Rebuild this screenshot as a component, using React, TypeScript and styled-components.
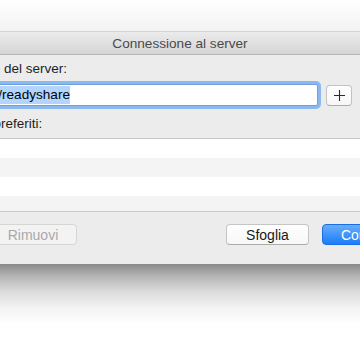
import React from 'react';
import styled, { createGlobalStyle } from 'styled-components';

const GlobalStyle = createGlobalStyle`
  html, body {
    margin: 0;
    padding: 0;
    background: #ffffff;
  }
  body {
    font-family: 'Liberation Sans', Arial, sans-serif;
    -webkit-font-smoothing: antialiased;
  }
`;

const Stage = styled.div`
  width: 360px;
  height: 343px;
  overflow: hidden;
  background: linear-gradient(to bottom, #ffffff 0px, #f2f2f2 31px, #ffffff 31px);
  display: flex;
  flex-direction: column;
`;

const Backdrop = styled.div`
  height: 31px;
  flex: none;
`;

const Window = styled.div`
  flex: none;
  width: 520px;
  margin-left: -70px;
  background: #ececec;
  display: flex;
  flex-direction: column;
  border-top: 1px solid #d4d4d4;
  box-sizing: border-box;
`;

const TitleBar = styled.div`
  height: 22px;
  background: linear-gradient(to bottom, #ebebeb, #d5d5d5);
  border-bottom: 1px solid #b6b6b6;
  display: flex;
  align-items: center;
  justify-content: center;
  font-size: 13.6px;
  color: #4a4a4a;
  padding-left: 70px;
  padding-right: 90px;
`;

const Body = styled.div`
  display: flex;
  flex-direction: column;
  padding: 6px 20px 19px;
`;

const Label = styled.div<{ $top?: number }>`
  font-size: 13.5px;
  line-height: 16px;
  color: #1e1e1e;
  margin-top: ${(p) => p.$top ?? 0}px;
`;

const FieldRow = styled.div`
  display: flex;
  align-items: center;
  gap: 8px;
  margin-top: 7px;
`;

const Field = styled.div`
  width: 368px;
  height: 22px;
  background: #fff;
  border: 1px solid #6f9fdc;
  box-shadow: 0 0 0 3px #8ab8ef;
  border-radius: 2px;
  box-sizing: border-box;
  display: flex;
  align-items: center;
  padding-left: 14px;
  font-size: 13.6px;
  color: #000;
  white-space: nowrap;
`;

const Selection = styled.span`
  background: #b3d5fd;
  line-height: 18px;
`;

const SmallButton = styled.button`
  width: 26px;
  height: 21px;
  padding: 0;
  background: linear-gradient(to bottom, #ffffff, #f6f6f6);
  border: 1px solid #c2c2c2;
  border-bottom-color: #ababab;
  border-radius: 4px;
  display: flex;
  align-items: center;
  justify-content: center;
`;

const List = styled.div`
  margin: 6px -20px 0;
  height: 74px;
  border-top: 1px solid #c9c9c9;
  border-bottom: 1px solid #c9c9c9;
  box-sizing: border-box;
  display: flex;
  flex-direction: column;
  overflow: hidden;
`;

const ListRow = styled.div<{ $alt: boolean }>`
  flex: none;
  height: 19px;
  background: ${(p) => (p.$alt ? '#f4f4f4' : '#ffffff')};
`;

const ButtonRow = styled.div`
  display: flex;
  align-items: center;
  margin-top: 12px;
`;

const PushButton = styled.button<{ $width: number; $variant?: 'default' | 'disabled' | 'primary' }>`
  width: ${(p) => p.$width}px;
  height: 21px;
  padding: 0;
  border-radius: 4px;
  font-family: 'Liberation Sans', Arial, sans-serif;
  font-size: 14px;
  box-sizing: border-box;
  flex: none;
  ${(p) =>
    p.$variant === 'primary'
      ? `
    background: linear-gradient(to bottom, #67aefc, #1c7cf8);
    border: 1px solid #1b6fe6;
    color: #ffffff;
  `
      : p.$variant === 'disabled'
      ? `
    background: #f3f3f3;
    border: 1px solid #d6d6d6;
    color: #a9a9a9;
  `
      : `
    background: linear-gradient(to bottom, #ffffff, #f7f7f7);
    border: 1px solid #c5c5c5;
    border-bottom-color: #acacac;
    color: #1a1a1a;
  `}
`;

const Spacer = styled.div`
  flex: 1;
`;

const Shadow = styled.div`
  height: 80px;
  flex: none;
  background: linear-gradient(
    to bottom,
    #8a8a8a 0px,
    #b4b4b4 12px,
    #dcdcdc 28px,
    #f4f4f4 45px,
    #ffffff 60px
  );
`;

function PlusIcon() {
  return (
    <svg width="13" height="13" viewBox="0 0 13 13">
      <path d="M6.5 1v11M1 6.5h11" stroke="#2a2a2a" strokeWidth="1.1" fill="none" />
    </svg>
  );
}

export default function App() {
  return (
    <>
      <GlobalStyle />
      <Stage>
        <Backdrop />
        <Window>
          <TitleBar>Connessione al server</TitleBar>
          <Body>
            <Label>Indirizzo del server:</Label>
            <FieldRow>
              <Field>
                <Selection>smb://readyshare</Selection>
              </Field>
              <SmallButton>
                <PlusIcon />
              </SmallButton>
              <SmallButton />
            </FieldRow>
            <Label $top={10}>Server preferiti:</Label>
            <List>
              {[0, 1, 2, 3].map((i) => (
                <ListRow key={i} $alt={i % 2 === 1} />
              ))}
            </List>
            <ButtonRow>
              <PushButton $width={88} $variant="disabled" style={{ marginLeft: 39 }}>
                Rimuovi
              </PushButton>
              <Spacer />
              <PushButton $width={83}>Sfoglia</PushButton>
              <PushButton $width={90} $variant="primary" style={{ marginLeft: 13, marginRight: 18 }}>
                Connetti
              </PushButton>
            </ButtonRow>
          </Body>
        </Window>
        <Shadow />
      </Stage>
    </>
  );
}
